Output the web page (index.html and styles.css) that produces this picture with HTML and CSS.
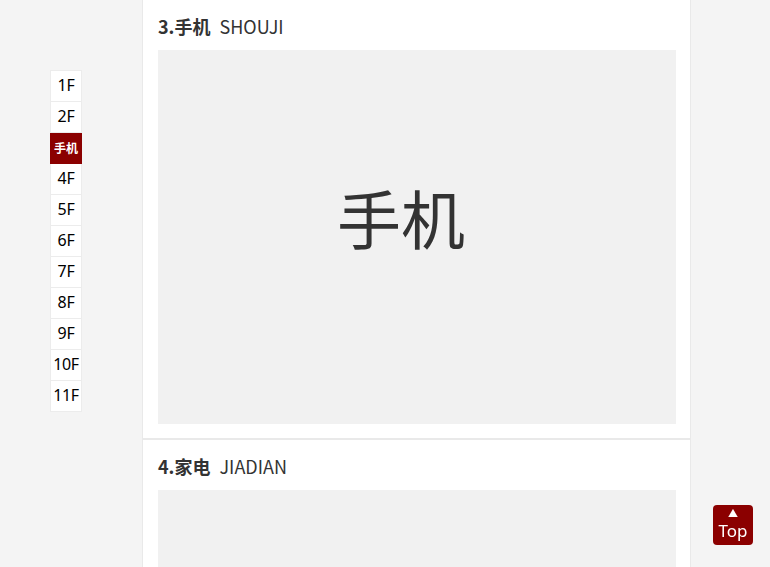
FILE: index.html
```html
<!DOCTYPE html>
<html lang="zh">
<head>
<meta charset="utf-8">
<title>楼层导航</title>
<link rel="stylesheet" href="styles.css">
</head>
<body>
<ul class="floor-nav">
  <li class="nav-item">1F</li>
  <li class="nav-item">2F</li>
  <li class="nav-item active">手机</li>
  <li class="nav-item">4F</li>
  <li class="nav-item">5F</li>
  <li class="nav-item">6F</li>
  <li class="nav-item">7F</li>
  <li class="nav-item">8F</li>
  <li class="nav-item">9F</li>
  <li class="nav-item">10F</li>
  <li class="nav-item">11F</li>
</ul>

<main class="main">
  <section class="floor">
    <h2 class="floor-title"><b>3.手机</b><span class="en">SHOUJI</span></h2>
    <div class="floor-box"><span class="floor-big">手机</span></div>
  </section>
  <section class="floor">
    <h2 class="floor-title"><b>4.家电</b><span class="en">JIADIAN</span></h2>
    <div class="floor-box"><span class="floor-big">家电</span></div>
  </section>
</main>

<a class="to-top" href="#"><span class="arrow">▲</span><span class="top-text">Top</span></a>
</body>
</html>
```

FILE: styles.css
```css
html, body {
  margin: 0;
  padding: 0;
  height: 100%;
  overflow: hidden;
}
body {
  background: #f4f4f4;
  font-family: "Noto Sans", "Noto Sans CJK SC", sans-serif;
  color: #333;
}
.floor-nav {
  position: fixed;
  left: 50px;
  top: 70px;
  margin: 0;
  padding: 0;
  list-style: none;
  width: 32px;
  border-top: 1px solid #ececec;
}
.nav-item {
  box-sizing: border-box;
  width: 32px;
  height: 31px;
  border: 1px solid #ececec;
  border-top: none;
  background: #fff;
  color: #000;
  font-size: 16px;
  line-height: 29px;
  text-align: center;
  letter-spacing: -0.3px;
}
.nav-item.active {
  background: #8b0000;
  border-color: #8b0000;
  color: #fff;
  font-size: 12px;
  font-weight: bold;
  letter-spacing: 0;
  font-family: "Noto Sans CJK SC", sans-serif;
}
.main {
  margin-left: 142px;
  width: 547px;
  background: #fff;
  border-left: 1px solid #e9e9e9;
  border-right: 1px solid #e9e9e9;
}
.floor {
  padding: 0 14px 14px 15px;
  border-bottom: 2px solid #e9e9e9;
}
.floor-title {
  margin: 0;
  height: 50px;
  line-height: 52px;
  font-size: 18px;
  font-weight: normal;
  font-family: "Noto Sans CJK SC", sans-serif;
  color: #333;
}
.floor-title b {
  font-weight: bold;
}
.floor-title .en {
  margin-left: 9px;
}
.floor-box {
  height: 374px;
  background: #f1f1f1;
  display: flex;
  align-items: center;
  justify-content: center;
}
.floor-big {
  font-size: 64px;
  font-family: "Noto Sans CJK SC", sans-serif;
  color: #333;
  margin-right: 32px;
  margin-bottom: 42px;
}
.to-top {
  position: fixed;
  left: 713px;
  top: 505px;
  width: 40px;
  height: 40px;
  border-radius: 4px;
  background: #8b0000;
  color: #fff;
  text-decoration: none;
  display: flex;
  flex-direction: column;
  align-items: center;
}
.arrow {
  font-size: 10px;
  line-height: 10px;
  margin-top: 3px;
}
.top-text {
  font-size: 17px;
  line-height: 22px;
  margin-top: 2px;
}
```
